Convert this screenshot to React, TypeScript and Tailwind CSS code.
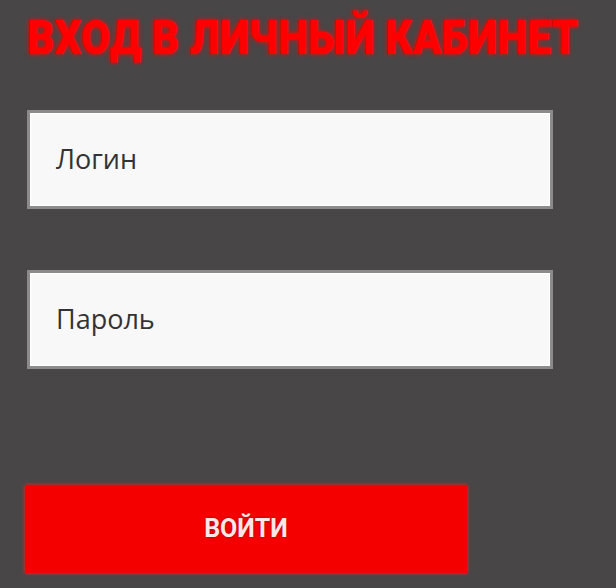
import React from "react";

function Field(props: { label: string }) {
  return (
    <div className="flex items-center w-[526px] h-[99px] bg-[#f8f8f8] border-[3px] border-[#8b8b8b] shadow-[inset_0_0_0_1px_#ffffff] pl-[26px]">
      <span className="text-[27px] text-[#333333] font-['Open_Sans',sans-serif]">{props.label}</span>
    </div>
  );
}

export default function App() {
  return (
    <div className="w-[616px] h-[588px] bg-[#484647] flex flex-col pl-[27px] overflow-hidden">
      <h1 className="mt-[12px] h-[52px] flex items-center text-[48px] leading-none font-black text-[#ff0000] font-['Roboto',sans-serif] [text-shadow:0_0_6px_#ff0000] whitespace-nowrap">
        <span className="inline-block origin-left scale-x-[0.885]">ВХОД В ЛИЧНЫЙ КАБИНЕТ</span>
      </h1>
      <div className="mt-[46px] flex flex-col gap-[61px]">
        <Field label="Логин" />
        <Field label="Пароль" />
      </div>
      <button className="-ml-[2px] mt-[116px] w-[442px] h-[88px] bg-[#f50000] shadow-[0_0_4px_#ff2020] flex items-center justify-center">
        <span className="text-[25px] font-bold text-[#fbe7e7] font-['Roboto',sans-serif] [text-shadow:0_0_3px_#b00000]">ВОЙТИ</span>
      </button>
    </div>
  );
}
